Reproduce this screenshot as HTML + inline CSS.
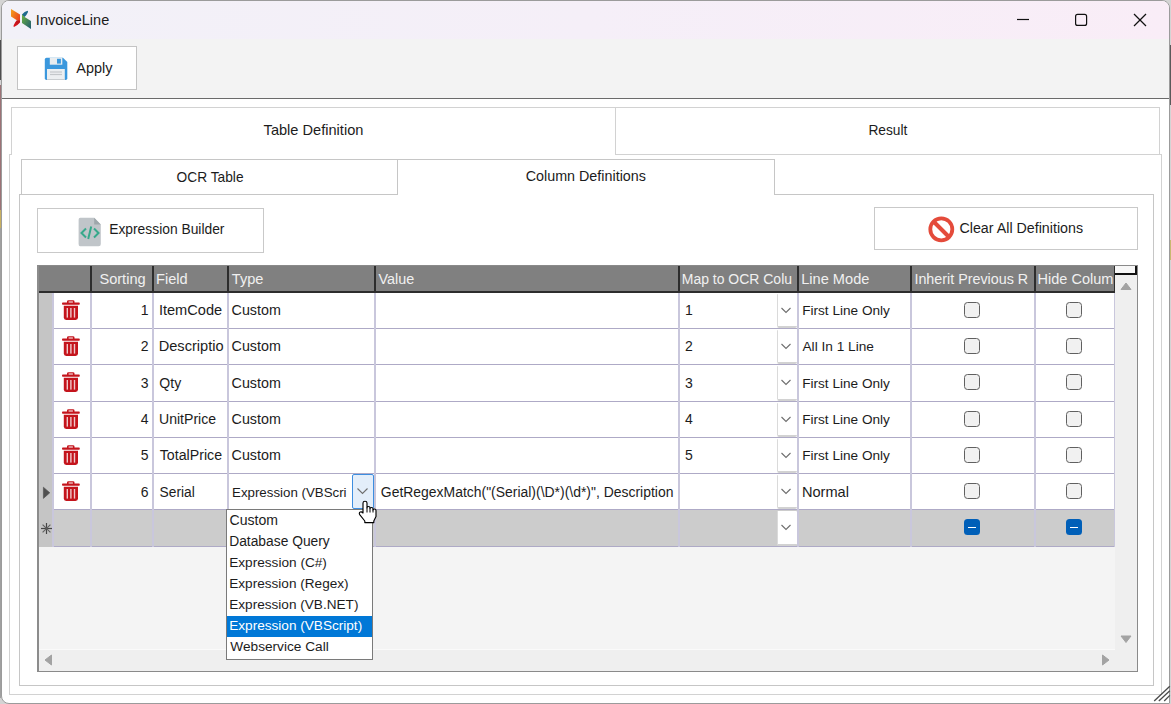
<!DOCTYPE html><html><head><meta charset="utf-8"><style>
html,body{margin:0;padding:0;}
body{width:1171px;height:704px;overflow:hidden;position:relative;background:#d4d4d4;font-family:"Liberation Sans",sans-serif;}
.a{position:absolute;box-sizing:border-box;}
.t{position:absolute;white-space:pre;font-family:"Liberation Sans",sans-serif;}
svg{position:absolute;overflow:visible;}
</style></head><body>
<div class="a" style="left:0px;top:40px;width:1px;height:40px;background:#4e4e4e;"></div>
<div class="a" style="left:0px;top:85px;width:1px;height:125px;background:#9c7276;"></div>
<div class="a" style="left:0px;top:210px;width:1px;height:18px;background:#c8b060;"></div>
<div class="a" style="left:0px;top:228px;width:1px;height:470px;background:#a0a0a0;"></div>
<div class="a" style="left:1170px;top:45px;width:1px;height:60px;background:#5a5a5a;"></div>
<div class="a" style="left:1170px;top:240px;width:1px;height:20px;background:#c8b870;"></div>
<div class="a" style="left:1px;top:0px;width:1169px;height:704px;background:#fff;border:1px solid #9b9b9b;border-radius:8px 8px 1px 8px;overflow:hidden;"></div>
<div class="a" style="left:2px;top:1px;width:1167px;height:38px;background:linear-gradient(90deg,#f2f1f8 0%,#f5eff8 50%,#f9edf7 100%);border-radius:7px 7px 0 0;"></div>
<div class="a" style="left:2px;top:39px;width:1167px;height:59px;background:#f3f3f3;"></div>
<div class="a" style="left:2px;top:98px;width:1167px;height:1px;background:#6a6a6a;"></div>
<svg style="left:0;top:0" width="40" height="40" viewBox="0 0 40 40">
<defs>
<linearGradient id="lo" x1="0" y1="0" x2="1" y2="0.6"><stop offset="0" stop-color="#f7a21b"/><stop offset="1" stop-color="#e8461e"/></linearGradient>
<linearGradient id="lr" x1="0" y1="1" x2="1" y2="0"><stop offset="0" stop-color="#e0141c"/><stop offset="1" stop-color="#b5141c"/></linearGradient>
<linearGradient id="lg" x1="0" y1="0" x2="1" y2="1"><stop offset="0" stop-color="#6cb33f"/><stop offset="1" stop-color="#1f5a72"/></linearGradient>
</defs>
<polygon points="11,9 20,14.5 20,22 16.5,20 11,16.5" fill="url(#lo)"/>
<path d="M20,20.5 V22.5 Q17,26 14,27 Q13,26.5 13.8,25 Q15,22 16.8,20.2 Z" fill="url(#lr)"/>
<path d="M22,14.5 Q24.5,11.5 27.6,10.8 Q28.4,11.3 27.8,12.6 Q26.5,15.5 24.6,17 L22,15.6 Z" fill="#1d6a8c"/>
<polygon points="22,14.5 24.6,17 31,21 31,29 22,23" fill="url(#lg)"/>
</svg>
<div class="t" style="left:35.87px;top:13.00px;font-size:14.50px;line-height:14.50px;color:#1c1c1c;">InvoiceLine</div>
<svg style="left:0;top:0" width="1171" height="40"><line x1="1017" y1="19.5" x2="1029" y2="19.5" stroke="#111" stroke-width="1.2"/><rect x="1075.6" y="14.4" width="11" height="11" rx="2" fill="none" stroke="#111" stroke-width="1.2"/><line x1="1134" y1="14" x2="1146" y2="26" stroke="#111" stroke-width="1.2"/><line x1="1146" y1="14" x2="1134" y2="26" stroke="#111" stroke-width="1.2"/></svg>
<div class="a" style="left:17px;top:46px;width:120px;height:44px;background:#fff;border:1px solid #c4c4c4;"></div>
<svg style="left:44px;top:57px" width="24" height="24" viewBox="0 0 24 24">
<path d="M2.5,0.7 H19 L23.3,5 V21.3 Q23.3,23 21.6,23 H2.5 Q0.8,23 0.8,21.3 V2.4 Q0.8,0.7 2.5,0.7 Z" fill="#3b98dd"/>
<rect x="5.8" y="0.7" width="12.5" height="7" fill="#e9edf0"/>
<rect x="13" y="1.8" width="3.9" height="4.8" fill="#3b98dd"/>
<rect x="3" y="12" width="17.8" height="11" fill="#eceff1"/>
<rect x="6" y="14.4" width="12" height="1.2" fill="#c3c7ca"/>
<rect x="6" y="16.9" width="12" height="1.2" fill="#c3c7ca"/>
<rect x="3" y="22" width="17.8" height="1" fill="#c9cdd0"/>
</svg>
<div class="t" style="left:76.30px;top:61.00px;font-size:14.47px;line-height:14.47px;color:#1c1c1c;">Apply</div>
<div class="a" style="left:9px;top:154px;width:1153px;height:541px;border:1px solid #d2d2d2;background:#fff;"></div>
<div class="a" style="left:615px;top:107px;width:545px;height:48px;border:1px solid #d2d2d2;background:#fff;"></div>
<div class="a" style="left:11px;top:107px;width:605px;height:48px;border:1px solid #d2d2d2;border-bottom:none;background:#fff;"></div>
<div class="t" style="left:263.60px;top:123.00px;font-size:14.60px;line-height:14.60px;color:#1c1c1c;">Table Definition</div>
<div class="t" style="left:868.40px;top:124.00px;font-size:13.75px;line-height:13.75px;color:#1c1c1c;">Result</div>
<div class="a" style="left:19px;top:194px;width:1135px;height:492px;border:1px solid #c6c6c6;background:#fff;"></div>
<div class="a" style="left:21px;top:159px;width:377px;height:36px;border:1px solid #c6c6c6;background:#fff;"></div>
<div class="a" style="left:397px;top:159px;width:378px;height:36px;border:1px solid #c6c6c6;border-bottom:none;background:#fff;"></div>
<div class="t" style="left:176.55px;top:171.00px;font-size:13.75px;line-height:13.75px;color:#1c1c1c;">OCR Table</div>
<div class="t" style="left:525.68px;top:169.00px;font-size:14.33px;line-height:14.33px;color:#1c1c1c;">Column Definitions</div>
<div class="a" style="left:37px;top:208px;width:227px;height:45px;border:1px solid #c9c9c9;background:#fff;"></div>
<svg style="left:78px;top:217px" width="24" height="30" viewBox="0 0 24 30">
<path d="M2.2,0.8 H16.2 L22.8,7.5 V27 Q22.8,29.2 20.6,29.2 H2.2 Q0.6,29.2 0.6,27 V3 Q0.6,0.8 2.2,0.8 Z" fill="#c0c5c9"/>
<path d="M16.2,0.8 L22.8,7.5 H16.2 Z" fill="#9ea7ab"/>
<polyline points="8,11.5 3.5,16 8,20.5" fill="none" stroke="#37a98b" stroke-width="2"/>
<polyline points="16,11.5 20.5,16 16,20.5" fill="none" stroke="#37a98b" stroke-width="2"/>
<line x1="13.2" y1="9.5" x2="10.2" y2="22" stroke="#37a98b" stroke-width="2"/>
</svg>
<div class="t" style="left:109.19px;top:223.00px;font-size:13.83px;line-height:13.83px;color:#1c1c1c;">Expression Builder</div>
<div class="a" style="left:874px;top:207px;width:264px;height:43px;border:1px solid #c9c9c9;background:#fff;"></div>
<svg style="left:928px;top:216px" width="27" height="27" viewBox="0 0 27 27">
<circle cx="13.3" cy="13.3" r="11" fill="none" stroke="#e44b3b" stroke-width="3.8"/>
<line x1="5.5" y1="5.5" x2="21" y2="21" stroke="#e44b3b" stroke-width="4"/>
</svg>
<div class="t" style="left:959.49px;top:221.00px;font-size:14.25px;line-height:14.25px;color:#1c1c1c;">Clear All Definitions</div>
<div class="a" style="left:37px;top:265px;width:1101px;height:407px;border:1px solid #8a8a8a;border-left:2px solid #8c8c8c;background:#f4f4f4;"></div>
<div class="a" style="left:39px;top:266px;width:1076px;height:26px;background:#808080;"></div>
<div class="a" style="left:39px;top:291px;width:1076px;height:2px;background:#2d2d2d;"></div>
<div class="a" style="left:90px;top:266px;width:2px;height:26px;background:#2d2d2d;"></div>
<div class="a" style="left:152px;top:266px;width:2px;height:26px;background:#2d2d2d;"></div>
<div class="a" style="left:227px;top:266px;width:2px;height:26px;background:#2d2d2d;"></div>
<div class="a" style="left:374px;top:266px;width:2px;height:26px;background:#2d2d2d;"></div>
<div class="a" style="left:678px;top:266px;width:2px;height:26px;background:#2d2d2d;"></div>
<div class="a" style="left:797px;top:266px;width:2px;height:26px;background:#2d2d2d;"></div>
<div class="a" style="left:910px;top:266px;width:2px;height:26px;background:#2d2d2d;"></div>
<div class="a" style="left:1034px;top:266px;width:2px;height:26px;background:#2d2d2d;"></div>
<div class="a" style="left:1114px;top:266px;width:2px;height:26px;background:#2d2d2d;"></div>
<div class="t" style="left:99.41px;top:272.00px;font-size:14.60px;line-height:14.60px;color:#f0f0f0;">Sorting</div>
<div class="t" style="left:156.00px;top:272.00px;font-size:14.60px;line-height:14.60px;color:#f0f0f0;">Field</div>
<div class="t" style="left:231.80px;top:272.00px;font-size:14.60px;line-height:14.60px;color:#f0f0f0;">Type</div>
<div class="t" style="left:378.40px;top:272.00px;font-size:14.42px;line-height:14.42px;color:#f0f0f0;">Value</div>
<div class="t" style="left:681.78px;top:272.00px;font-size:13.98px;line-height:13.98px;color:#f0f0f0;">Map to OCR Colu</div>
<div class="t" style="left:801.23px;top:272.00px;font-size:14.60px;line-height:14.60px;color:#f0f0f0;">Line Mode</div>
<div class="t" style="left:914.41px;top:272.00px;font-size:14.32px;line-height:14.32px;color:#f0f0f0;">Inherit Previous R</div>
<div class="t" style="left:1037.54px;top:272.00px;font-size:14.52px;line-height:14.52px;color:#f0f0f0;">Hide Colum</div>
<div class="a" style="left:1115px;top:266px;width:22px;height:9px;background:#f7f7f7;border-right:2px solid #111;border-bottom:2px solid #111;"></div>
<div class="a" style="left:39px;top:293px;width:14px;height:254px;background:#c5c5c5;"></div>
<div class="a" style="left:53px;top:293px;width:1061px;height:35px;background:#fff;"></div>
<div class="a" style="left:53px;top:329px;width:1061px;height:35px;background:#fff;"></div>
<div class="a" style="left:53px;top:365px;width:1061px;height:36px;background:#fff;"></div>
<div class="a" style="left:53px;top:402px;width:1061px;height:35px;background:#fff;"></div>
<div class="a" style="left:53px;top:438px;width:1061px;height:35px;background:#fff;"></div>
<div class="a" style="left:53px;top:474px;width:1061px;height:35px;background:#fff;"></div>
<div class="a" style="left:53px;top:328px;width:1062px;height:1px;background:#aeaac6;"></div>
<div class="a" style="left:53px;top:364px;width:1062px;height:1px;background:#aeaac6;"></div>
<div class="a" style="left:53px;top:401px;width:1062px;height:1px;background:#aeaac6;"></div>
<div class="a" style="left:53px;top:437px;width:1062px;height:1px;background:#aeaac6;"></div>
<div class="a" style="left:53px;top:473px;width:1062px;height:1px;background:#aeaac6;"></div>
<div class="a" style="left:53px;top:509px;width:1062px;height:1px;background:#aeaac6;"></div>
<div class="a" style="left:53px;top:546px;width:1062px;height:1px;background:#aeaac6;"></div>
<div class="a" style="left:53px;top:510px;width:1061px;height:36px;background:#cccccc;"></div>
<div class="a" style="left:52px;top:293px;width:2px;height:254px;background:#c9c7dc;"></div>
<div class="a" style="left:90px;top:293px;width:2px;height:254px;background:#c9c7dc;"></div>
<div class="a" style="left:152px;top:293px;width:2px;height:254px;background:#c9c7dc;"></div>
<div class="a" style="left:227px;top:293px;width:2px;height:254px;background:#c9c7dc;"></div>
<div class="a" style="left:374px;top:293px;width:2px;height:254px;background:#c9c7dc;"></div>
<div class="a" style="left:678px;top:293px;width:2px;height:254px;background:#c9c7dc;"></div>
<div class="a" style="left:797px;top:293px;width:2px;height:254px;background:#c9c7dc;"></div>
<div class="a" style="left:910px;top:293px;width:2px;height:254px;background:#c9c7dc;"></div>
<div class="a" style="left:1034px;top:293px;width:2px;height:254px;background:#c9c7dc;"></div>
<div class="a" style="left:1114px;top:293px;width:2px;height:254px;background:#c9c7dc;"></div>
<svg style="left:62px;top:299.8px" width="18" height="21" viewBox="0 0 18 21"><path d="M5,1.5 Q5,0.2 6.5,0.2 H11 Q12.5,0.2 12.5,1.5 V2.5 H17 Q17.8,2.5 17.8,3.5 Q17.8,4.7 17,4.7 H0.8 Q0,4.7 0,3.5 Q0,2.5 0.8,2.5 H5 Z M6.6,2.5 H10.9 V1.6 H6.6 Z" fill="#c4141c"/><path d="M1.8,5.8 H16 V17.6 Q16,20 13.6,20 H4.2 Q1.8,20 1.8,17.6 Z" fill="#c4141c"/><rect x="4.6" y="8" width="1.4" height="9.6" fill="#f0c9cb"/><rect x="8.2" y="8" width="1.4" height="9.6" fill="#f0c9cb"/><rect x="11.8" y="8" width="1.4" height="9.6" fill="#f0c9cb"/></svg>
<div class="t" style="left:100px;width:48.6px;text-align:right;top:303.00px;font-size:14.0px;line-height:14.0px;color:#1c1c1c">1</div>
<div class="t" style="left:158.88px;top:303.00px;font-size:14.60px;line-height:14.60px;color:#1c1c1c;">ItemCode</div>
<div class="t" style="left:231.58px;top:303.00px;font-size:14.31px;line-height:14.31px;color:#1c1c1c;">Custom</div>
<div class="t" style="left:685.00px;top:303.00px;font-size:14.00px;line-height:14.00px;color:#1c1c1c;">1</div>
<div class="t" style="left:802.22px;top:304.00px;font-size:13.60px;line-height:13.60px;color:#1c1c1c;">First Line Only</div>
<div class="a" style="left:777px;top:294px;width:20px;height:34px;background:#fff;border-left:1px solid #dadada;border-bottom:2px solid #d2d2d2;border-radius:1px 1px 2px 2px;"></div>
<svg style="left:780px;top:306px" width="12" height="8"><polyline points="1.5,2 6,6.5 10.5,2" fill="none" stroke="#6e6e6e" stroke-width="1.1"/></svg>
<div class="a" style="left:964px;top:302px;width:16px;height:16px;border:1.3px solid #606060;border-radius:3.5px;background:#f1f1f1;"></div>
<div class="a" style="left:1066px;top:302px;width:16px;height:16px;border:1.3px solid #606060;border-radius:3.5px;background:#f1f1f1;"></div>
<svg style="left:62px;top:335.8px" width="18" height="21" viewBox="0 0 18 21"><path d="M5,1.5 Q5,0.2 6.5,0.2 H11 Q12.5,0.2 12.5,1.5 V2.5 H17 Q17.8,2.5 17.8,3.5 Q17.8,4.7 17,4.7 H0.8 Q0,4.7 0,3.5 Q0,2.5 0.8,2.5 H5 Z M6.6,2.5 H10.9 V1.6 H6.6 Z" fill="#c4141c"/><path d="M1.8,5.8 H16 V17.6 Q16,20 13.6,20 H4.2 Q1.8,20 1.8,17.6 Z" fill="#c4141c"/><rect x="4.6" y="8" width="1.4" height="9.6" fill="#f0c9cb"/><rect x="8.2" y="8" width="1.4" height="9.6" fill="#f0c9cb"/><rect x="11.8" y="8" width="1.4" height="9.6" fill="#f0c9cb"/></svg>
<div class="t" style="left:100px;width:48.6px;text-align:right;top:339.00px;font-size:14.0px;line-height:14.0px;color:#1c1c1c">2</div>
<div class="t" style="left:158.72px;top:339.00px;font-size:14.60px;line-height:14.60px;color:#1c1c1c;">Descriptio</div>
<div class="t" style="left:231.58px;top:339.00px;font-size:14.31px;line-height:14.31px;color:#1c1c1c;">Custom</div>
<div class="t" style="left:685.00px;top:339.00px;font-size:14.00px;line-height:14.00px;color:#1c1c1c;">2</div>
<div class="t" style="left:802.50px;top:340.00px;font-size:13.66px;line-height:13.66px;color:#1c1c1c;">All In 1 Line</div>
<div class="a" style="left:777px;top:330px;width:20px;height:34px;background:#fff;border-left:1px solid #dadada;border-bottom:2px solid #d2d2d2;border-radius:1px 1px 2px 2px;"></div>
<svg style="left:780px;top:342px" width="12" height="8"><polyline points="1.5,2 6,6.5 10.5,2" fill="none" stroke="#6e6e6e" stroke-width="1.1"/></svg>
<div class="a" style="left:964px;top:338px;width:16px;height:16px;border:1.3px solid #606060;border-radius:3.5px;background:#f1f1f1;"></div>
<div class="a" style="left:1066px;top:338px;width:16px;height:16px;border:1.3px solid #606060;border-radius:3.5px;background:#f1f1f1;"></div>
<svg style="left:62px;top:371.8px" width="18" height="21" viewBox="0 0 18 21"><path d="M5,1.5 Q5,0.2 6.5,0.2 H11 Q12.5,0.2 12.5,1.5 V2.5 H17 Q17.8,2.5 17.8,3.5 Q17.8,4.7 17,4.7 H0.8 Q0,4.7 0,3.5 Q0,2.5 0.8,2.5 H5 Z M6.6,2.5 H10.9 V1.6 H6.6 Z" fill="#c4141c"/><path d="M1.8,5.8 H16 V17.6 Q16,20 13.6,20 H4.2 Q1.8,20 1.8,17.6 Z" fill="#c4141c"/><rect x="4.6" y="8" width="1.4" height="9.6" fill="#f0c9cb"/><rect x="8.2" y="8" width="1.4" height="9.6" fill="#f0c9cb"/><rect x="11.8" y="8" width="1.4" height="9.6" fill="#f0c9cb"/></svg>
<div class="t" style="left:100px;width:48.6px;text-align:right;top:376.00px;font-size:14.0px;line-height:14.0px;color:#1c1c1c">3</div>
<div class="t" style="left:159.34px;top:376.00px;font-size:14.05px;line-height:14.05px;color:#1c1c1c;">Qty</div>
<div class="t" style="left:231.58px;top:376.00px;font-size:14.31px;line-height:14.31px;color:#1c1c1c;">Custom</div>
<div class="t" style="left:685.00px;top:376.00px;font-size:14.00px;line-height:14.00px;color:#1c1c1c;">3</div>
<div class="t" style="left:802.22px;top:377.00px;font-size:13.60px;line-height:13.60px;color:#1c1c1c;">First Line Only</div>
<div class="a" style="left:777px;top:366px;width:20px;height:35px;background:#fff;border-left:1px solid #dadada;border-bottom:2px solid #d2d2d2;border-radius:1px 1px 2px 2px;"></div>
<svg style="left:780px;top:378px" width="12" height="8"><polyline points="1.5,2 6,6.5 10.5,2" fill="none" stroke="#6e6e6e" stroke-width="1.1"/></svg>
<div class="a" style="left:964px;top:374px;width:16px;height:16px;border:1.3px solid #606060;border-radius:3.5px;background:#f1f1f1;"></div>
<div class="a" style="left:1066px;top:374px;width:16px;height:16px;border:1.3px solid #606060;border-radius:3.5px;background:#f1f1f1;"></div>
<svg style="left:62px;top:408.8px" width="18" height="21" viewBox="0 0 18 21"><path d="M5,1.5 Q5,0.2 6.5,0.2 H11 Q12.5,0.2 12.5,1.5 V2.5 H17 Q17.8,2.5 17.8,3.5 Q17.8,4.7 17,4.7 H0.8 Q0,4.7 0,3.5 Q0,2.5 0.8,2.5 H5 Z M6.6,2.5 H10.9 V1.6 H6.6 Z" fill="#c4141c"/><path d="M1.8,5.8 H16 V17.6 Q16,20 13.6,20 H4.2 Q1.8,20 1.8,17.6 Z" fill="#c4141c"/><rect x="4.6" y="8" width="1.4" height="9.6" fill="#f0c9cb"/><rect x="8.2" y="8" width="1.4" height="9.6" fill="#f0c9cb"/><rect x="11.8" y="8" width="1.4" height="9.6" fill="#f0c9cb"/></svg>
<div class="t" style="left:100px;width:48.6px;text-align:right;top:412.00px;font-size:14.0px;line-height:14.0px;color:#1c1c1c">4</div>
<div class="t" style="left:159.01px;top:412.00px;font-size:14.07px;line-height:14.07px;color:#1c1c1c;">UnitPrice</div>
<div class="t" style="left:231.58px;top:412.00px;font-size:14.31px;line-height:14.31px;color:#1c1c1c;">Custom</div>
<div class="t" style="left:685.00px;top:412.00px;font-size:14.00px;line-height:14.00px;color:#1c1c1c;">4</div>
<div class="t" style="left:802.22px;top:413.00px;font-size:13.60px;line-height:13.60px;color:#1c1c1c;">First Line Only</div>
<div class="a" style="left:777px;top:403px;width:20px;height:34px;background:#fff;border-left:1px solid #dadada;border-bottom:2px solid #d2d2d2;border-radius:1px 1px 2px 2px;"></div>
<svg style="left:780px;top:415px" width="12" height="8"><polyline points="1.5,2 6,6.5 10.5,2" fill="none" stroke="#6e6e6e" stroke-width="1.1"/></svg>
<div class="a" style="left:964px;top:411px;width:16px;height:16px;border:1.3px solid #606060;border-radius:3.5px;background:#f1f1f1;"></div>
<div class="a" style="left:1066px;top:411px;width:16px;height:16px;border:1.3px solid #606060;border-radius:3.5px;background:#f1f1f1;"></div>
<svg style="left:62px;top:444.8px" width="18" height="21" viewBox="0 0 18 21"><path d="M5,1.5 Q5,0.2 6.5,0.2 H11 Q12.5,0.2 12.5,1.5 V2.5 H17 Q17.8,2.5 17.8,3.5 Q17.8,4.7 17,4.7 H0.8 Q0,4.7 0,3.5 Q0,2.5 0.8,2.5 H5 Z M6.6,2.5 H10.9 V1.6 H6.6 Z" fill="#c4141c"/><path d="M1.8,5.8 H16 V17.6 Q16,20 13.6,20 H4.2 Q1.8,20 1.8,17.6 Z" fill="#c4141c"/><rect x="4.6" y="8" width="1.4" height="9.6" fill="#f0c9cb"/><rect x="8.2" y="8" width="1.4" height="9.6" fill="#f0c9cb"/><rect x="11.8" y="8" width="1.4" height="9.6" fill="#f0c9cb"/></svg>
<div class="t" style="left:100px;width:48.6px;text-align:right;top:448.00px;font-size:14.0px;line-height:14.0px;color:#1c1c1c">5</div>
<div class="t" style="left:159.72px;top:448.00px;font-size:14.21px;line-height:14.21px;color:#1c1c1c;">TotalPrice</div>
<div class="t" style="left:231.58px;top:448.00px;font-size:14.31px;line-height:14.31px;color:#1c1c1c;">Custom</div>
<div class="t" style="left:685.00px;top:448.00px;font-size:14.00px;line-height:14.00px;color:#1c1c1c;">5</div>
<div class="t" style="left:802.22px;top:449.00px;font-size:13.60px;line-height:13.60px;color:#1c1c1c;">First Line Only</div>
<div class="a" style="left:777px;top:439px;width:20px;height:34px;background:#fff;border-left:1px solid #dadada;border-bottom:2px solid #d2d2d2;border-radius:1px 1px 2px 2px;"></div>
<svg style="left:780px;top:451px" width="12" height="8"><polyline points="1.5,2 6,6.5 10.5,2" fill="none" stroke="#6e6e6e" stroke-width="1.1"/></svg>
<div class="a" style="left:964px;top:447px;width:16px;height:16px;border:1.3px solid #606060;border-radius:3.5px;background:#f1f1f1;"></div>
<div class="a" style="left:1066px;top:447px;width:16px;height:16px;border:1.3px solid #606060;border-radius:3.5px;background:#f1f1f1;"></div>
<svg style="left:62px;top:480.8px" width="18" height="21" viewBox="0 0 18 21"><path d="M5,1.5 Q5,0.2 6.5,0.2 H11 Q12.5,0.2 12.5,1.5 V2.5 H17 Q17.8,2.5 17.8,3.5 Q17.8,4.7 17,4.7 H0.8 Q0,4.7 0,3.5 Q0,2.5 0.8,2.5 H5 Z M6.6,2.5 H10.9 V1.6 H6.6 Z" fill="#c4141c"/><path d="M1.8,5.8 H16 V17.6 Q16,20 13.6,20 H4.2 Q1.8,20 1.8,17.6 Z" fill="#c4141c"/><rect x="4.6" y="8" width="1.4" height="9.6" fill="#f0c9cb"/><rect x="8.2" y="8" width="1.4" height="9.6" fill="#f0c9cb"/><rect x="11.8" y="8" width="1.4" height="9.6" fill="#f0c9cb"/></svg>
<div class="t" style="left:100px;width:48.6px;text-align:right;top:485.00px;font-size:14.0px;line-height:14.0px;color:#1c1c1c">6</div>
<div class="t" style="left:159.55px;top:486.00px;font-size:13.77px;line-height:13.77px;color:#1c1c1c;">Serial</div>
<div class="t" style="left:232.04px;top:486.00px;font-size:13.30px;line-height:13.30px;color:#1c1c1c;">Expression (VBScri</div>
<div class="t" style="left:380.80px;top:486.00px;font-size:13.94px;line-height:13.94px;color:#1c1c1c;">GetRegexMatch("(Serial)(\D*)(\d*)", Description</div>
<div class="t" style="left:801.90px;top:485.00px;font-size:14.60px;line-height:14.60px;color:#1c1c1c;">Normal</div>
<div class="a" style="left:777px;top:475px;width:20px;height:34px;background:#fff;border-left:1px solid #dadada;border-bottom:2px solid #d2d2d2;border-radius:1px 1px 2px 2px;"></div>
<svg style="left:780px;top:487px" width="12" height="8"><polyline points="1.5,2 6,6.5 10.5,2" fill="none" stroke="#6e6e6e" stroke-width="1.1"/></svg>
<div class="a" style="left:964px;top:483px;width:16px;height:16px;border:1.3px solid #606060;border-radius:3.5px;background:#f1f1f1;"></div>
<div class="a" style="left:1066px;top:483px;width:16px;height:16px;border:1.3px solid #606060;border-radius:3.5px;background:#f1f1f1;"></div>
<svg style="left:41px;top:486px" width="10" height="14"><polygon points="2.4,1.2 8.8,6.8 2.4,12.4" fill="#505050" stroke="#505050" stroke-width="0.6" stroke-linejoin="round"/></svg>
<svg style="left:40px;top:522px" width="14" height="14"><g stroke="#454545" stroke-width="1.2"><line x1="6.5" y1="1" x2="6.5" y2="12"/><line x1="1" y1="6.5" x2="12" y2="6.5"/></g><g stroke="#606060" stroke-width="1.1"><line x1="2.6" y1="2.6" x2="10.4" y2="10.4"/><line x1="2.6" y1="10.4" x2="10.4" y2="2.6"/></g></svg>
<div class="a" style="left:777px;top:511px;width:20px;height:35px;background:#fff;border-left:1px solid #dadada;border-bottom:2px solid #d2d2d2;border-radius:1px 1px 2px 2px;"></div>
<svg style="left:780px;top:523px" width="12" height="8"><polyline points="1.5,2 6,6.5 10.5,2" fill="none" stroke="#6e6e6e" stroke-width="1.1"/></svg>
<div class="a" style="left:964px;top:519px;width:16px;height:16px;border-radius:3.5px;background:#005fb8;"></div>
<div class="a" style="left:968px;top:526.5px;width:8px;height:1.5px;background:#fff;"></div>
<div class="a" style="left:1066px;top:519px;width:16px;height:16px;border-radius:3.5px;background:#005fb8;"></div>
<div class="a" style="left:1070px;top:526.5px;width:8px;height:1.5px;background:#fff;"></div>
<div class="a" style="left:1115px;top:275px;width:22px;height:374px;background:#efefef;"></div>
<svg style="left:1115px;top:275px" width="22" height="380"><polygon points="11,8 16,14.5 6,14.5" fill="#a3a3a3" stroke="#a3a3a3" stroke-width="1" stroke-linejoin="round"/><polygon points="6,361 16,361 11,367.5" fill="#a3a3a3" stroke="#a3a3a3" stroke-width="1" stroke-linejoin="round"/></svg>
<div class="a" style="left:39px;top:649px;width:1076px;height:22px;background:#efefef;border-top:1px solid #fafafa;"></div>
<div class="a" style="left:1115px;top:649px;width:22px;height:22px;background:#efefef;"></div>
<svg style="left:38px;top:649px" width="1100" height="22"><polygon points="7,11 13.5,6 13.5,16" fill="#a3a3a3" stroke="#a3a3a3" stroke-width="1" stroke-linejoin="round"/><polygon points="1071,11 1064.5,6 1064.5,16" fill="#a3a3a3" stroke="#a3a3a3" stroke-width="1" stroke-linejoin="round"/></svg>
<div class="a" style="left:352px;top:474px;width:22px;height:35px;background:#e3eefa;border:1.5px solid #3d8ee0;border-radius:2px;"></div>
<svg style="left:356px;top:487px" width="14" height="9"><polyline points="1.5,1.5 6.5,6.5 11.5,1.5" fill="none" stroke="#6e6e6e" stroke-width="1.1"/></svg>
<div class="a" style="left:226px;top:509px;width:147px;height:151px;background:#fff;border:1px solid #7a7a7a;"></div>
<div class="a" style="left:227px;top:616px;width:145px;height:21px;background:#0078d7;"></div>
<div class="t" style="left:229.60px;top:513.00px;font-size:14.07px;line-height:14.07px;color:#1c1c1c;">Custom</div>
<div class="t" style="left:229.19px;top:535.00px;font-size:13.82px;line-height:13.82px;color:#1c1c1c;">Database Query</div>
<div class="t" style="left:229.21px;top:556.00px;font-size:13.63px;line-height:13.63px;color:#1c1c1c;">Expression (C#)</div>
<div class="t" style="left:229.22px;top:577.00px;font-size:13.60px;line-height:13.60px;color:#1c1c1c;">Expression (Regex)</div>
<div class="t" style="left:229.26px;top:598.00px;font-size:13.60px;line-height:13.60px;color:#1c1c1c;">Expression (VB.NET)</div>
<div class="t" style="left:229.22px;top:619.00px;font-size:13.60px;line-height:13.60px;color:#fff;">Expression (VBScript)</div>
<div class="t" style="left:230.30px;top:640.00px;font-size:13.66px;line-height:13.66px;color:#1c1c1c;">Webservice Call</div>
<svg style="left:358px;top:500px" width="20" height="24" viewBox="0 0 20 24">
<path d="M5,13 V2.9 Q5,1.2 7,1.2 Q9,1.2 9,2.9 V7.8 Q9,6.5 10.5,6.5 Q12,6.5 12,7.9 V8.6 Q12,7.5 13.5,7.5 Q15,7.5 15,8.8 V9.9 Q15,9 16.5,9 Q18,9 18,10.6 V16.6 L15.8,21 V22.6 H6.8 V21 L1.7,14.6 Q0.7,12.8 2.3,12 Q3.7,11.4 4.7,12.8 Z" fill="#fff" stroke="#000" stroke-width="1.15" stroke-linejoin="round"/>
<line x1="9" y1="7.6" x2="9" y2="12.5" stroke="#000" stroke-width="1"/>
<line x1="12" y1="8.4" x2="12" y2="12.5" stroke="#000" stroke-width="1"/>
<line x1="15" y1="9.6" x2="15" y2="12.5" stroke="#000" stroke-width="1"/>
</svg>
<svg style="left:1150px;top:683px" width="21" height="21"><g stroke="#4a4a4a" stroke-width="1.3"><line x1="19.8" y1="3.2" x2="4.2" y2="18"/><line x1="19.8" y1="7.8" x2="8.8" y2="18"/><line x1="19.8" y1="12.4" x2="14.2" y2="18"/></g></svg>
</body></html>
